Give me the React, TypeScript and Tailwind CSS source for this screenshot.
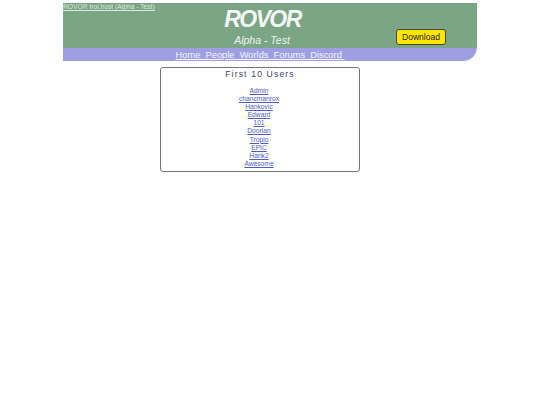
const users = ["Admin", "chancmanrox", "Hankovic", "Edward", "101", "Doorian", "Tropio", "EPIC", "Hank2", "Awesome"];

export default function App() {
  return (
    <div className="w-[540px] h-[405px] bg-white pt-[3px] font-['Liberation_Sans',Arial,sans-serif] overflow-hidden">
      {/* header */}
      <div className="mx-[63px] w-[414px] rounded-br-[14px] overflow-hidden">
        <div className="h-[45px] bg-[#7ba585] relative flex flex-col items-center text-white">
          <a href="#" className="absolute left-0 top-0 text-[6.7px] leading-[7px] underline text-[#dfe9e1]">ROVOR trol.host (Alpha - Test)</a>
          <div className="ml-[-15px] mt-[4px] text-[23px] leading-[24px] italic font-bold tracking-[-1.6px] text-[#f4f7f4]">ROVOR</div>
          <div className="ml-[-16px] mt-[2px] text-[10.5px] leading-[14px] italic text-[#eef3ef]">Alpha - Test</div>
          <button className="absolute left-[333px] top-[26px] w-[50px] h-[16px] bg-[#ffe600] border border-[#444] rounded-[3px] text-[8.5px] leading-none text-[#222]">Download</button>
        </div>
        <div className="h-[13px] bg-[#a09ee2] flex justify-center text-[9.3px] leading-[14px] text-[#f4f4fc]">
          <a href="#" className="underline whitespace-pre ml-[-20px]">Home  People  Worlds  Forums  Discord </a>
        </div>
      </div>
      {/* users box */}
      <div className="mt-[6px] ml-[160px] w-[200px] h-[105px] border border-[#777] rounded-[3px] flex flex-col items-center">
        <div className="mt-[1px] text-[8.6px] leading-[10px] tracking-[1.15px] text-[#3f3f6a]">First 10 Users</div>
        <div className="mt-[8px] flex flex-col items-center text-[6.7px] leading-[8.1px] text-[#4f5cc0] ml-[-2px]">
          {users.map((u) => (
            <a key={u} href="#" className="underline">{u}</a>
          ))}
        </div>
      </div>
    </div>
  );
}
